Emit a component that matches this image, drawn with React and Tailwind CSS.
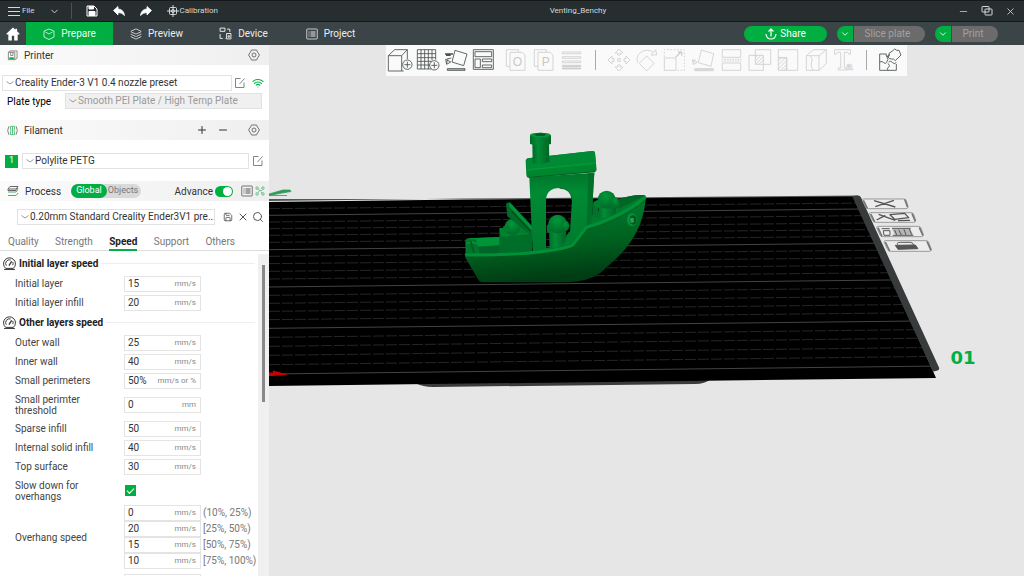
import React, { useState } from "react";
import { ChevronDown, Minus, Plus, X, Search, Wifi, Save, Layers } from "lucide-react";

const plateLines = [
  [86, 70], [106, 88, 1], [126, 108], [146, 130], [166, 150], [187, 170],
  [209, 191, 1], [229, 212], [251, 235], [274, 257], [297, 280], [321, 302, 1],
  [346, 326], [370, 351], [394, 376], [419, 401], [445, 426, 1], [472, 452],
  [499, 478], [526, 506], [554, 533], [582, 562, 1],
];

const speedGroups = [
  {
    title: "Initial layer speed",
    rows: [
      { id: "initial-layer", label: "Initial layer", value: "15", unit: "mm/s" },
      { id: "initial-infill", label: "Initial layer infill", value: "20", unit: "mm/s" },
    ],
  },
  {
    title: "Other layers speed",
    rows: [
      { id: "outer-wall", label: "Outer wall", value: "25", unit: "mm/s" },
      { id: "inner-wall", label: "Inner wall", value: "40", unit: "mm/s" },
      { id: "small-perimeters", label: "Small perimeters", value: "50%", unit: "mm/s or %" },
      { id: "small-threshold", label: "Small perimter threshold", value: "0", unit: "mm", tall: true },
      { id: "sparse-infill", label: "Sparse infill", value: "50", unit: "mm/s" },
      { id: "solid-infill", label: "Internal solid infill", value: "40", unit: "mm/s" },
      { id: "top-surface", label: "Top surface", value: "30", unit: "mm/s" },
    ],
  },
];

const overhangs = [
  { value: "0", range: "(10%, 25%)" },
  { value: "20", range: "[25%, 50%)" },
  { value: "15", range: "[50%, 75%)" },
  { value: "10", range: "[75%, 100%)" },
];

/* ---------- small icons ---------- */

const Glyph = ({ className = "size-3", box = "0 0 24 24", width = 1.6, children }) => (
  <svg className={`shrink-0 ${className}`} viewBox={box} fill="none" stroke="currentColor" strokeWidth={width} strokeLinejoin="round" aria-hidden="true">
    {children}
  </svg>
);

const GearIcon = () => (
  <Glyph className="size-3 text-[#555]">
    <path d="M7 2h10l2 4 4 6-4 6-2 4H7l-2-4-4-6 4-6z" />
    <circle cx="12" cy="12" r="4" />
  </Glyph>
);

const EditIcon = () => (
  <Glyph className="size-3 text-[#666]">
    <path d="M13 3H3v18h17V11M11 14 21 3" />
  </Glyph>
);

const GaugeIcon = () => (
  <Glyph className="size-[13px] text-[#333]" width={1.8}>
    <path d="M5 21A11 11 0 1 1 19 21zM2 23h20" />
    <path d="M6 16A7 7 0 0 1 14 5.500M18 9a7 7 0 0 1 0 6" />
    <path d="m11 16 5-8" strokeWidth="2.400" />
  </Glyph>
);

const ListIcon = ({ className }) => (
  <Glyph className={className}>
    <rect x="1.500" y="2" width="21" height="20" rx="1" />
    <path d="M5 8h2M9 8h10M5 12h2M9 12h10M5 16h2M9 16h10" strokeWidth="2" />
  </Glyph>
);

/* ---------- toolbar icons, drawn on an 84x90 grid ---------- */

const sceneTools = [
  [
    { name: "Add object", art: <><path d="M7 32v46h40V32zM7 32 26 14h38L47 32M64 14v28M47 78h6" /><circle cx="64" cy="59" r="14" /><path d="M64 50v18M55 59h18" /></> },
    { name: "Add plate", art: <><path d="M10 14h55v30M10 14v58h42M10 26h55M10 38h55M10 49h42M10 60h38M21 14v58M32 14v58M43 14v58M54 14v32" /><circle cx="61" cy="61" r="14" /><path d="M61 52v18M52 61h18" /></> },
    { name: "Auto orient", art: <><path d="m39 16 36 11-10 35-35-11zM18 43q-4 4-4 14m-3-14 3 15 12-7zM14 42l14-3" /><path d="M9 27h24M12 31h14" strokeWidth="4" /><path d="M16 71h53v5H16z" fill="#bbb" /></> },
    { name: "Arrange", art: <><rect x="10" y="14" width="60" height="59" /><path d="M15 20h50v15H15zM15 42h16v26H15zM37 42h28v8H37zM37 60h28v8H37z" /></> },
  ],
  [
    { name: "Split to objects", off: true, art: <><path d="M24 64H13V14h36v7M24 22h37l8 8v46H24z" /><text x="32" y="63" fontSize="36" stroke="none" fill="#c8c8c8">O</text></> },
    { name: "Split to parts", off: true, art: <><path d="M24 64H13V14h36v7M24 22h37l8 8v46H24z" /><text x="35" y="63" fontSize="36" stroke="none" fill="#c8c8c8">P</text></> },
    { name: "Variable layer height", off: true, art: <><path d="M13 21h55v5H13zM13 35h55v5H13zM13 48h55v5H13z" /><path d="M13 61h55v4H13zM13 69h55v3H13z" fill="#ccc" /></> },
  ],
  [
    { name: "Move", off: true, art: <path d="m42 12 12 12H46v6h-8v-6H30zM42 78l12-12H46v-6h-8v6H30zM9 45l12-12v8h6v8h-6v8zM75 45 63 33v8h-6v8h6v8zM38 41h8v8h-8z" /> },
    { name: "Rotate", off: true, art: <path d="m41 33 22 22-22 23-22-23zM14 53Q8 42 17 28 32 10 55 18l6 5M54 30h17l-3-16z" /> },
    { name: "Scale", off: true, art: <><path d="M10 39h35v37H10z" /><path d="M10 36V14h60v62H48" strokeDasharray="5 5" /><path d="m44 37 15-15M51 21h11v11" strokeWidth="4" /></> },
    { name: "Lay on face", off: true, art: <><path d="m37 15 37 11-8 38-38-11zM18 42q-4 4-4 14m-4-12 3 15 12-7z" /><rect x="16" y="71" width="58" height="6" rx="3" fill="#ddd" /></> },
    { name: "Cut", off: true, art: <><path d="M16 37V14h55v23zM16 54v22h55V54z" /><path d="M14 43h59M14 48h59" strokeDasharray="5 3" /></> },
    { name: "Mesh boolean", off: true, art: <><path d="M12 31h43v45H12zM31 14h46v44H31z" /><path d="m31 38 7-7M31 48l17-17M33 57l22-22M43 57l12-12" /></> },
    { name: "Support painting", off: true, art: <><path d="M16 38V14h58v62H41V38z" /><path d="M16 38h25v38H16zM16 48l10-10M16 60l22-22M16 72l25-25M24 76l17-17M33 76l8-8" /></> },
    { name: "Seam painting", off: true, art: <><path d="M16 32h38v44H16zM16 32l21-18h39L54 32M76 14v42L54 76" /><path d="M28 32q10 10 3 22-3 12 6 22" /></> },
    { name: "Text shape", off: true, art: <><path d="M17 14h47v14h-4l-4-6H46v47h7v6H28v-6h7V22H25l-4 6h-4z" /><text x="52" y="75" fontSize="34" fontWeight="700" strokeWidth="2">a</text></> },
  ],
  [
    { name: "Assembly view", art: <><path d="M11 27h20q-3 8 4 8t5-7M11 27v49h50V57M11 51q8-4 12 2 6 6 9-2M36 76q-5-8 2-9 6-4-2-12M38 51q6-6 12 2 4 6 11 0" /><path d="m48 19 8-7q6 6 13 4l6 14-17 17q-5-7-11-5-7 2-13-9 7-1 5-8zM32 34q8 10 0 17" /></> },
  ],
];

const ToolButton = ({ tool }) => (
  <button type="button" aria-label={tool.name} className={tool.off ? "text-[#cfcfcf]" : "text-[#4a5254]"}>
    <svg className="h-[30px] w-7" viewBox="0 0 84 90" fill="none" stroke="currentColor" strokeWidth="2.600" strokeLinejoin="round" fontFamily="Liberation Sans, sans-serif">
      {tool.art}
    </svg>
  </button>
);

/* ---------- 3D scene ---------- */

const Benchy = () => (
  <g transform="translate(450 120) scale(.3333)">
    <defs>
      <linearGradient id="hull" x1="0" y1="0" x2=".2" y2="1">
        <stop offset=".2" stopColor="#007d2f" />
        <stop offset=".65" stopColor="#00601f" />
        <stop offset="1" stopColor="#003d14" />
      </linearGradient>
      <linearGradient id="wall" x1="0" y1="0" x2="0" y2="1">
        <stop offset="0" stopColor="#00752c" />
        <stop offset=".25" stopColor="#008a34" />
        <stop offset="1" stopColor="#007a2e" />
      </linearGradient>
      <linearGradient id="tube" x1="0" y1="0" x2="1" y2="0">
        <stop offset="0" stopColor="#006a28" />
        <stop offset=".35" stopColor="#008c36" />
        <stop offset="1" stopColor="#006425" />
      </linearGradient>
      <radialGradient id="ball" cx=".45" cy=".3" r=".7">
        <stop offset="0" stopColor="#00983a" />
        <stop offset="1" stopColor="#006a28" />
      </radialGradient>
    </defs>

    {/* stern deck */}
    <path d="M46 362q2-7 10-7l95-4v52l-104 2z" fill="#007d2f" />
    <path d="m56 355 94-4v24l-68 5z" fill="#009439" />
    <path d="m84 380 66-4v26l-60 3z" fill="#006526" />
    <path d="m52 364 6-6h20l10 42-36 4z" fill="#00752b" />
    <path d="M50 371q14-9 32 1" stroke="#009b3b" strokeWidth="4" fill="none" />
    <path d="m62 364 10 36" stroke="#005a20" strokeWidth="5" />

    {/* crate, lid and stern passenger */}
    <path d="m148 325 98-6v78l-98 6z" fill="#006d29" />
    <path d="m148 325 98-8v25l-92 8z" fill="#00852f" />
    <ellipse cx="188" cy="321" rx="24" ry="24" fill="url(#ball)" />
    <circle cx="169" cy="326" r="10" fill="#007d2e" />
    <circle cx="221" cy="329" r="11" fill="#007d2e" />
    <path d="M168 252q3-7 12-5l66 70v32l-74-60z" fill="#006b28" />
    <path d="m180 248 66 72v12l-70-74z" fill="#009538" />
    <path d="m184 272 58 62" stroke="#004e1b" strokeWidth="4" />

    {/* bow deck and passenger */}
    <path d="m424 285 80-46q45-17 82-13l2 12-180 95z" fill="#007a2d" />
    <path d="M504 239q45-17 82-13l-80 40z" fill="#006625" />
    <path d="M427 250q8-10 18-8v52l-18-4z" fill="#00722b" />
    <path d="M444 240h54v40q-20 14-50 15z" fill="url(#tube)" />
    <circle cx="470" cy="239" r="27" fill="url(#ball)" />
    <circle cx="443" cy="252" r="11" fill="#007d2e" />
    <ellipse cx="496" cy="248" rx="11" ry="17" fill="url(#ball)" />

    {/* cabin */}
    <path fillRule="evenodd" fill="url(#wall)" d="m238 172 195-14-9 150-58 74-72 8-46 4zM288 384l70-16 8-128q-2-34-38-36-37 1-40 34z" />
    <path d="m415 160 18-2-9 150-14 14z" fill="#007029" />
    <path d="M366 240q-2-34-38-36" stroke="#006325" strokeWidth="3" fill="none" />

    {/* helmsman */}
    <path d="M296 310h53v64l-50 14z" fill="url(#tube)" />
    <circle cx="323" cy="312" r="28" fill="url(#ball)" />
    <ellipse cx="347" cy="318" rx="11" ry="15" fill="url(#ball)" />
    <ellipse cx="296" cy="326" rx="6" ry="13" fill="#00752b" />
    <path d="m350 345 18-18v45l-30 12z" fill="#007d2e" />

    {/* roof and chimney */}
    <path d="m227 121 6-6 194-22q7-1 8 5l5 53-5 5-197 18q-8 0-9-10z" fill="#00852f" />
    <path d="m228 119 5-4 194-22q7-1 8 5l3 31-208 22z" fill="#008a34" />
    <path d="m230 150 208-21" stroke="#009a3a" strokeWidth="4" />
    <path d="m237 172 199-17" stroke="#00601f" strokeWidth="3" />
    <path d="M247 70h50l1 56q-25 10-50 4z" fill="url(#tube)" />
    <path d="M240 46q31-15 63 0v26q-31 10-63 0z" fill="url(#tube)" />
    <ellipse cx="271" cy="45" rx="31" ry="7" fill="#00963a" />
    <ellipse cx="271" cy="44" rx="16" ry="4" fill="#005a20" />

    {/* hull */}
    <path d="M45 402q160 2 270-18 40-6 52-14l42-50q110-32 178-92l-1 20q-12 100-94 174l-42 38q-38 26-100 27H102q-12 0-17-8l-38-64z" fill="url(#hull)" />
    <path d="M46 405q160 2 268-16 46-7 55-15l40-52q110-33 177-91" stroke="#009037" strokeWidth="9" fill="none" strokeLinejoin="round" />
    <path d="M48 414q160 2 268-16 48-8 60-18l38-50q100-28 170-86" stroke="#005a20" strokeWidth="2" fill="none" strokeLinejoin="round" />
    <ellipse cx="546" cy="299" rx="15" ry="19" fill="#009538" />
    <ellipse cx="549" cy="300" rx="10" ry="14" fill="#00561d" />
    <path d="M541 294q-2 8 2 15l9-2-1-13z" fill="#2f9a55" />
  </g>
);

const PlateBadges = () => (
  <g transform="translate(830 180) scale(.3333)" fill="none" stroke="#9a9a9a" strokeWidth="3" strokeLinejoin="round">
    <path d="M101 57h120q6 0 8 5l5 18q0 6-6 6H115q-6 0-8-5l-9-18q-2-6 3-6z" fill="#ececec" />
    <path d="M121 98h122q6 0 8 5l6 18q0 6-6 6H137q-6 0-8-5l-10-18q-2-6 2-6z" fill="#ececec" />
    <path d="M143 139h122q6 0 8 5l7 20q0 6-6 6H158q-6 0-8-5l-9-20q-2-6 2-6z" fill="#ececec" />
    <path d="M165 182h123q6 0 8 5l8 21q0 6-6 6H181q-6 0-8-5l-10-21q-2-6 2-6z" fill="#ececec" />
    <g stroke="#777" strokeWidth="5">
      <path d="m100 61 12 24M224 58l9 24M122 102l12 24M246 100l10 24M144 143l12 26M268 142l11 25M166 186l13 27M291 184l12 27" />
    </g>
    <g stroke="#555">
      <path d="m132 62 64 19M192 61l-56 19M146 103l50 18M140 120l26-14M180 104l44-4 12 13-42 5zM204 122l36-1" strokeWidth="4" />
      <path d="M186 146h54l10 18h-56z" fill="#b5b5b5" stroke="none" />
      <path d="M155 146h24M160 152h20v14h-18zM186 145h56M194 150l6 15M206 149l8 16M222 148l6 17M238 146l7 18M188 166h62" />
      <path d="m196 196 60-1 8 11-60 2z" fill="#555" />
      <path d="M203 194q-4-7 8-7h30q8 0 10 8" />
    </g>
  </g>
);

const Scene = () => (
  <svg className="absolute inset-0 size-full" viewBox="269 45 755 531" preserveAspectRatio="xMinYMin slice" role="img" aria-label="Build plate with Benchy model">
    <defs>
      <clipPath id="plate">
        <path d="M269 201.500 464 199.500 856 196 936 378 269 386.500z" />
      </clipPath>
    </defs>
    <rect x="269" y="45" width="755" height="531" fill="#e6e6e6" />
    <path d="M415 383q8 4 18 4l262-3q10 0 16-5z" fill="#3a3c3c" />
    <path d="M269 201 464 198.500 858 195.500V199H269z" fill="#555858" />
    <path d="M269 202 464 199.500 856 196.500 936 378 269 386z" fill="#000" />
    <g clipPath="url(#plate)">
      {plateLines.map(([left, right, major]) => {
        const y1 = 180 + left / 3;
        const y2 = 180 + right / 3;
        return (
          <line
            key={left}
            x1="269"
            y1={y1}
            x2="936"
            y2={y2 + ((y2 - y1) / 561) * 106}
            stroke={major ? "#444" : "#262626"}
            strokeWidth="1"
            strokeDasharray={major ? undefined : "11 2"}
          />
        );
      })}
    </g>
    <path d="m852 196 6-.5q2 0 3 2l78 170q1 3-3 3.500l-3 .5z" fill="#383b3b" />
    <path d="m269 194 14-4h7l1 1.500-9 1.500-13 2.500zM269 195.500h18" fill="#2f9d5a" stroke="#2f9d5a" strokeWidth=".8" />
    <path d="M269 372.500h4v-2l15 4-15 1.500h-4z" fill="#c80000" />
    <PlateBadges />
    <text x="963" y="364" textAnchor="middle" fontSize="18" fontWeight="700" fill="#00ae42" fontFamily="DejaVu Sans, sans-serif">
      01
    </text>
    <Benchy />
  </svg>
);

/* ---------- sidebar pieces ---------- */

const PresetSelect = ({ label, value, className = "", disabled }) => (
  <div className={`relative min-w-0 ${className}`}>
    <select
      aria-label={label}
      disabled={disabled}
      className={`block h-4 w-full appearance-none border border-[#e2e2e2] pl-3 text-[10px] leading-[14px] opacity-100 ${
        disabled ? "bg-[#f0f0f0] text-[#9a9a9a]" : "bg-white text-[#333]"
      }`}
    >
      <option>{value}</option>
    </select>
    <svg className="pointer-events-none absolute top-1.5 left-1 h-1 w-2" viewBox="0 0 16 8" fill="none" stroke="#999" strokeWidth="2">
      <path d="m1 1 7 5 7-5" />
    </svg>
  </div>
);

const SectionHeader = ({ icon, title, className = "", children }) => (
  <div className={`flex h-5 items-center bg-linear-to-r from-[#fbfbfb] to-[#efefef] pr-2 pl-[7px] ${className}`}>
    {icon}
    <h2 className="ml-1.5 flex-1 text-[10px] text-[#333]">{title}</h2>
    {children}
  </div>
);

const SpeedInput = ({ id, value, unit, label }) => (
  <div className="flex h-4 w-[77px] shrink-0 items-center border border-[#e4e4e4] bg-white pr-1 pl-[3px]">
    <input id={id} aria-label={label} defaultValue={value} className="w-6 min-w-0 flex-1 text-[10px] leading-[14px] text-[#333] outline-none" />
    {unit && <span className="text-[8px] leading-[14px] whitespace-nowrap text-[#888]">{unit}</span>}
  </div>
);

const SpeedRow = ({ row }) => (
  <div className={`flex items-center ${row.tall ? "h-[29px]" : "h-[19px]"}`}>
    <label htmlFor={row.id} className="w-[109px] shrink-0 pr-5 text-[10px] leading-[11px] text-[#444]">
      {row.tall ? row.label : <span className="whitespace-nowrap">{row.label}</span>}
    </label>
    <SpeedInput id={row.id} value={row.value} unit={row.unit} />
  </div>
);

const Sidebar = () => {
  const [tab, setTab] = useState("Speed");

  return (
    <aside className="flex w-[269px] shrink-0 flex-col overflow-hidden bg-white">
      <SectionHeader
        title="Printer"
        icon={
          <Glyph className="size-[11px] text-[#666]">
            <path d="M3 5h14v16H3zM3 5l4-3h15v16l-5 3M8 5v7h5V5" />
            <path d="M5 18h10" stroke="#00ae42" strokeWidth="4" />
          </Glyph>
        }
      >
        <button type="button" aria-label="Printer settings" className="mr-px">
          <GearIcon />
        </button>
      </SectionHeader>

      <div className="mt-2.5 flex items-center pr-[5px] pl-0.5">
        <PresetSelect label="Printer preset" value="Creality Ender-3 V1 0.4 nozzle preset" className="flex-1" />
        <button type="button" aria-label="Edit printer" className="ml-0.5">
          <EditIcon />
        </button>
        <button type="button" aria-label="Connection" className="ml-1.5">
          <Wifi className="size-3 text-[#00ae42]" strokeWidth={2.2} />
        </button>
      </div>
      <div className="mt-0.5 flex items-center pr-[7px] pl-[7px]">
        <span className="w-[58px] text-[10px] text-black">Plate type</span>
        <PresetSelect label="Plate type" value="Smooth PEI Plate / High Temp Plate" className="flex-1" disabled />
      </div>

      <SectionHeader
        title="Filament"
        className="mt-[11px]"
        icon={
          <Glyph className="size-[11px] text-[#777]" width={2}>
            <path d="M4 3q-5 9 0 18M20 3q5 9 0 18" />
            <path d="M7 3q3 9 0 18M12 3v18M17 3q-3 9 0 18M7 3h10M7 21h10" stroke="#4cc07a" />
          </Glyph>
        }
      >
        <button type="button" aria-label="Add filament" className="mr-[9px]">
          <Plus className="size-3 text-[#333]" />
        </button>
        <button type="button" aria-label="Remove filament" className="mr-[19px]">
          <Minus className="size-3 text-[#333]" />
        </button>
        <button type="button" aria-label="Filament settings" className="mr-px">
          <GearIcon />
        </button>
      </SectionHeader>

      <div className="mt-[13px] flex items-center pr-[5px] pl-[5px]">
        <span className="mr-1 flex size-[13px] items-center justify-center bg-[#00ae42] text-[9px] text-white">1</span>
        <PresetSelect label="Filament preset" value="Polylite PETG" className="flex-1" />
        <button type="button" aria-label="Edit filament" className="ml-[3px]">
          <EditIcon />
        </button>
      </div>

      <SectionHeader
        title={
          <span className="flex items-center">
            <span>Process</span>
            <span className="ml-2.5 flex h-3.5 items-center rounded-full bg-[#d9d9d9] text-[9px]">
              <button type="button" className="h-3.5 rounded-full bg-[#00ae42] px-[5px] text-white">Global</button>
              <button type="button" className="pr-[3px] pl-px text-[#777]">Objects</button>
            </span>
          </span>
        }
        className="mt-3"
        icon={
          <Glyph className="size-3 text-[#666]" width={2}>
            <path d="M6 3h16l-4 5H2zM2 8v3h16l4-5" />
            <path d="M2 14h16l4-5M2 21h16l4-5" stroke="#4aae70" />
          </Glyph>
        }
      >
        <label htmlFor="advance" className="text-[10px] text-[#333]">Advance</label>
        <input
          id="advance"
          type="checkbox"
          role="switch"
          defaultChecked
          className="mx-0.5 flex h-[11px] w-[18px] appearance-none items-center justify-end rounded-full bg-[#00ae42] p-px before:size-[9px] before:rounded-full before:bg-white before:content-['']"
        />
        <button type="button" aria-label="Compare presets" className="ml-1.5">
          <ListIcon className="size-3 text-[#555]" />
        </button>
        <button type="button" aria-label="Parameter links" className="-mr-1 ml-0.5">
          <Glyph className="size-[10px] text-[#5cc084]" width={2.2}>
            <circle cx="5" cy="5" r="3" />
            <circle cx="19" cy="5" r="3" />
            <circle cx="5" cy="19" r="3" />
            <circle cx="19" cy="19" r="3" />
            <path d="m8 7 3 4h5l2-3M7 16l4-5M14 14l3 3" />
          </Glyph>
        </button>
      </SectionHeader>

      <div className="mt-2 flex items-center pr-[5px] pl-[17px]">
        <PresetSelect label="Process preset" value="0.20mm Standard Creality Ender3V1 pre..." className="flex-1" />
        <button type="button" aria-label="Save preset" className="ml-2">
          <Save className="size-[10px] text-[#555]" />
        </button>
        <button type="button" aria-label="Delete preset" className="ml-1">
          <X className="size-3 text-[#555]" />
        </button>
        <button type="button" aria-label="Search settings" className="ml-[3px]">
          <Search className="size-3 text-[#555]" />
        </button>
      </div>

      <div role="tablist" className="mt-[9px] flex h-[17px] justify-between border-b border-[#ddd] pr-[34px] pl-2">
        {["Quality", "Strength", "Speed", "Support", "Others"].map((name) => (
          <button
            key={name}
            type="button"
            role="tab"
            aria-selected={tab === name}
            onClick={() => setTab(name)}
            className={`-mb-px border-b-2 text-[10px] leading-[15px] ${
              tab === name ? "border-[#00ae42] font-bold text-[#222]" : "border-transparent text-[#777]"
            }`}
          >
            {name}
          </button>
        ))}
      </div>

      <div className="flex min-h-0 flex-1">
        <div className="min-w-0 flex-1 overflow-hidden pt-0.5 pr-[3px]">
          {speedGroups.map((group) => (
            <section key={group.title}>
              <div className="flex h-[21px] items-center pl-[3px]">
                <GaugeIcon />
                <h3 className="mx-[3px] text-[10px] font-bold text-[#222]">{group.title}</h3>
                <div className="h-px flex-1 bg-[#eee]"></div>
              </div>
              <div className="pl-[15px]">
                {group.rows.map((row) => (
                  <SpeedRow key={row.id} row={row} />
                ))}
              </div>
            </section>
          ))}

          <div className="flex h-[29px] items-center pl-[15px]">
            <label htmlFor="slow-down" className="w-[110px] pr-5 text-[10px] leading-[11px] text-[#444]">
              Slow down for overhangs
            </label>
            <input
              id="slow-down"
              type="checkbox"
              defaultChecked
              className="flex size-[11px] appearance-none items-center justify-center bg-[#00ae42] before:mb-0.5 before:h-1 before:w-[7px] before:-rotate-45 before:border-b before:border-l before:border-white before:content-['']"
            />
          </div>

          <div className="flex items-center pl-[15px]">
            <div className="w-[109px] shrink-0 text-[10px] text-[#444]">Overhang speed</div>
            <div>
              {overhangs.map((o) => (
                <div key={o.value} className="flex items-center">
                  <SpeedInput value={o.value} unit="mm/s" label={`Overhang speed ${o.range}`} />
                  <span className="ml-0.5 text-[10px] leading-4 whitespace-nowrap text-[#777]">{o.range}</span>
                </div>
              ))}
            </div>
          </div>
          <div className="mt-[5px] pl-[124px]">
            <SpeedInput label="Bridge speed" />
          </div>
        </div>
        <div className="mt-[3px] flex w-[11px] justify-center bg-[#f0f0f0] pt-[11px]">
          <div className="h-[137px] w-[3px] bg-[#888]"></div>
        </div>
      </div>
    </aside>
  );
};

/* ---------- top bars ---------- */

const TitleBar = () => (
  <header className="flex h-[22px] shrink-0 items-center border-y border-[#15191a] bg-[#262e30] text-[8px] text-[#d5d8d9]">
    <button type="button" className="flex items-center gap-0.5 pl-2">
      <Glyph className="h-[11px] w-3" box="0 0 12 11" width={1}>
        <path d="M0 1.500h12M0 5.500h12M0 9.500h12" />
      </Glyph>
      File
    </button>
    <button type="button" aria-label="More" className="ml-3.5">
      <ChevronDown className="size-[11px]" />
    </button>
    <div className="ml-[11px] h-4 w-px bg-[#4a5355]"></div>
    <button type="button" aria-label="Save" className="ml-3.5">
      <Glyph className="size-3 text-white" width={2}>
        <path d="M2 2h14l6 6v14H2z" />
        <path d="M6 2v6h9V2M6 13h12v8H6z" fill="currentColor" />
      </Glyph>
    </button>
    <button type="button" aria-label="Undo" className="ml-[15px]">
      <Glyph className="size-3 text-white">
        <path d="M10 3v5q11 0 13 13-5-6-13-6v5L1 11z" fill="currentColor" />
      </Glyph>
    </button>
    <button type="button" aria-label="Redo" className="ml-[15px]">
      <Glyph className="size-3 text-white">
        <path d="M14 3v5Q3 8 1 21q5-6 13-6v5l9-9z" fill="currentColor" />
      </Glyph>
    </button>
    <button type="button" className="ml-[15px] flex items-center gap-px">
      <Glyph className="size-3" width={2}>
        <rect x="5" y="5" width="14" height="14" rx="2" />
        <circle cx="12" cy="12" r="3" />
        <path d="M12 0v24M0 12h24" />
      </Glyph>
      Calibration
    </button>
    <div className="flex-1 text-center">Venting_Benchy</div>
    <button type="button" aria-label="Minimize" className="ml-5">
      <Minus className="size-[11px]" strokeWidth={1.6} />
    </button>
    <button type="button" aria-label="Restore" className="ml-3">
      <Glyph className="size-3" width={2}>
        <rect x="2" y="3" width="14" height="11" rx="1" />
        <rect x="8" y="8" width="14" height="12" rx="1" />
      </Glyph>
    </button>
    <button type="button" aria-label="Close" className="mr-2 ml-3">
      <X className="size-[11px]" strokeWidth={1.8} />
    </button>
  </header>
);

const NavTab = ({ icon, children, active }) => (
  <button
    type="button"
    className={`flex h-full w-[87px] items-center justify-center gap-1.5 text-[10px] ${
      active ? "bg-[#00ae42] text-[#e9fff0]" : "text-[#eceeee]"
    }`}
  >
    {icon}
    {children}
  </button>
);

const SplitButton = ({ label, className }) => (
  <div className={`flex h-4 gap-px overflow-hidden rounded-full ${className}`}>
    <button type="button" aria-label={`${label} options`} className="flex w-4 items-center justify-center bg-[#00ae42] text-white">
      <ChevronDown className="size-2.5" />
    </button>
    <button type="button" className="flex-1 bg-[#6b6b6b] pr-1 text-[10px] leading-4 text-[#a2a2a2]">
      {label}
    </button>
  </div>
);

const NavBar = () => (
  <nav className="flex h-[23px] shrink-0 items-center bg-[#3b4446] pr-[26px]">
    <button type="button" aria-label="Home" className="flex h-full w-[26px] items-center justify-center text-white">
      <svg className="size-[14px]" viewBox="0 0 24 24" fill="currentColor">
        <path d="M12 1 1 11v2h3v10h6v-8h4v8h6V13h3v-2l-4-3.600V3h-3v1.600z" />
      </svg>
    </button>
    <NavTab
      active
      icon={
        <Glyph>
          <path d="m12 2 10 4v12l-10 5-10-5V6zM5 8l7 4 7-4" />
        </Glyph>
      }
    >
      Prepare
    </NavTab>
    <NavTab icon={<Layers className="size-3" strokeWidth={1.6} />}>Preview</NavTab>
    <NavTab
      icon={
        <Glyph className="size-[13px]" width={1.8}>
          <path d="M2 2h9v6H2zM15 4h5v5M2 13v8h5M11 21h1" />
          <rect x="14" y="12" width="8" height="10" />
          <path d="M17 16h2v3h-2z" />
        </Glyph>
      }
    >
      Device
    </NavTab>
    <NavTab icon={<ListIcon className="size-3" />}>Project</NavTab>
    <div className="flex-1"></div>
    <button type="button" className="flex h-4 w-[83px] items-center justify-center gap-[3px] rounded-full bg-[#00ae42] text-[10px] text-white">
      <Glyph width={2.4}>
        <path d="M12 17V2M7 7l5-5 5 5M2 12q1 10 10 10t10-10" />
      </Glyph>
      Share
    </button>
    <SplitButton label="Slice plate" className="ml-2.5 w-[88px]" />
    <SplitButton label="Print" className="ml-2.5 w-[63px]" />
  </nav>
);

const App = () => {
  return (
    <div className="flex h-screen flex-col overflow-hidden bg-[#e6e6e6] font-[Roboto,'Noto_Sans',sans-serif]">
      <TitleBar />
      <NavBar />
      <div className="flex min-h-0 flex-1">
        <Sidebar />
        <main className="relative min-w-0 flex-1">
          <Scene />
          <div className="relative flex justify-center">
            <div role="toolbar" className="flex h-[31px] items-start bg-[#fafafa] pr-[3px]">
              {sceneTools.map((group, i) => (
                <React.Fragment key={i}>
                  {i === 1 && <div className="w-1"></div>}
                  {i > 1 && <div className="mx-[9px] mt-[5px] h-5 w-px bg-[#a5aaab]"></div>}
                  {group.map((tool) => (
                    <ToolButton key={tool.name} tool={tool} />
                  ))}
                </React.Fragment>
              ))}
            </div>
          </div>
        </main>
      </div>
    </div>
  );
};

export default App;
